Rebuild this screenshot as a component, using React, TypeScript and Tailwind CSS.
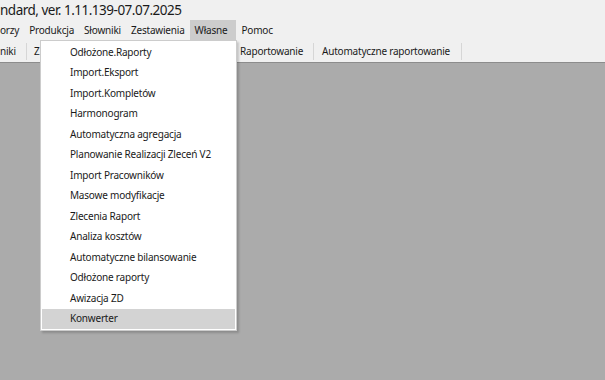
const menuBar = ["orzy", "Produkcja", "Słowniki", "Zestawienia", "Własne", "Pomoc"]

const items = [
  "Odłożone.Raporty",
  "Import.Eksport",
  "Import.Kompletów",
  "Harmonogram",
  "Automatyczna agregacja",
  "Planowanie Realizacji Zleceń V2",
  "Import Pracowników",
  "Masowe modyfikacje",
  "Zlecenia Raport",
  "Analiza kosztów",
  "Automatyczne bilansowanie",
  "Odłożone raporty",
  "Awizacja ZD",
  "Konwerter",
]

export default function App() {
  return (
    <div className="relative w-[605px] h-[380px] overflow-hidden bg-[#ababab] flex flex-col text-[#1a1a1a] tracking-[-0.2px]" style={{ fontFamily: '"Noto Sans", "Open Sans", sans-serif' }}>
      <div className="h-[20px] bg-[#f0f0f0] flex items-center pt-[2px]">
        <span className="text-[13.5px] leading-none whitespace-nowrap tracking-[-0.5px]">ndard, ver. 1.11.139-07.07.2025</span>
      </div>
      <div className="h-[20px] bg-[#f0f0f0] flex items-center text-[10px]">
        {menuBar.map((m, i) => (
          <div
            key={m}
            className={
              "h-full flex items-center whitespace-nowrap " +
              (i === 0 ? "pl-0 pr-[5px] " : m === "Własne" ? "pl-[5px] pr-[9px] bg-[#cccccc] " : "px-[5px] ")
            }
          >
            {m}
          </div>
        ))}
      </div>
      <div className="h-[23px] bg-[#f0f0f0] border-b border-[#8c8c8c] flex items-center text-[10px]">
        <span className="w-[26px]">niki</span>
        <div className="w-px h-[17px] bg-[#d6d6d6]" />
        <span className="pl-[7px] w-[213px]">Z</span>
        <span className="w-[73px]">Raportowanie</span>
        <div className="w-px h-[17px] bg-[#d6d6d6]" />
        <span className="pl-[8px] w-[147px]">Automatyczne raportowanie</span>
        <div className="w-px h-[17px] bg-[#d6d6d6]" />
      </div>
      <div className="flex-1" />

      <div className="absolute left-[40px] top-[40px] w-[197px] bg-white border border-[#cccccc] shadow-[2px_2px_2px_rgba(0,0,0,0.18)] px-[1px] pt-[1px] pb-[1px] text-[10px]">
        {items.map((it) => (
          <div
            key={it}
            className={
              "h-[20.5px] flex items-center pl-[28px] whitespace-nowrap " +
              (it === "Konwerter" ? "bg-[#d3d3d3]" : "")
            }
          >
            {it}
          </div>
        ))}
      </div>
    </div>
  )
}
